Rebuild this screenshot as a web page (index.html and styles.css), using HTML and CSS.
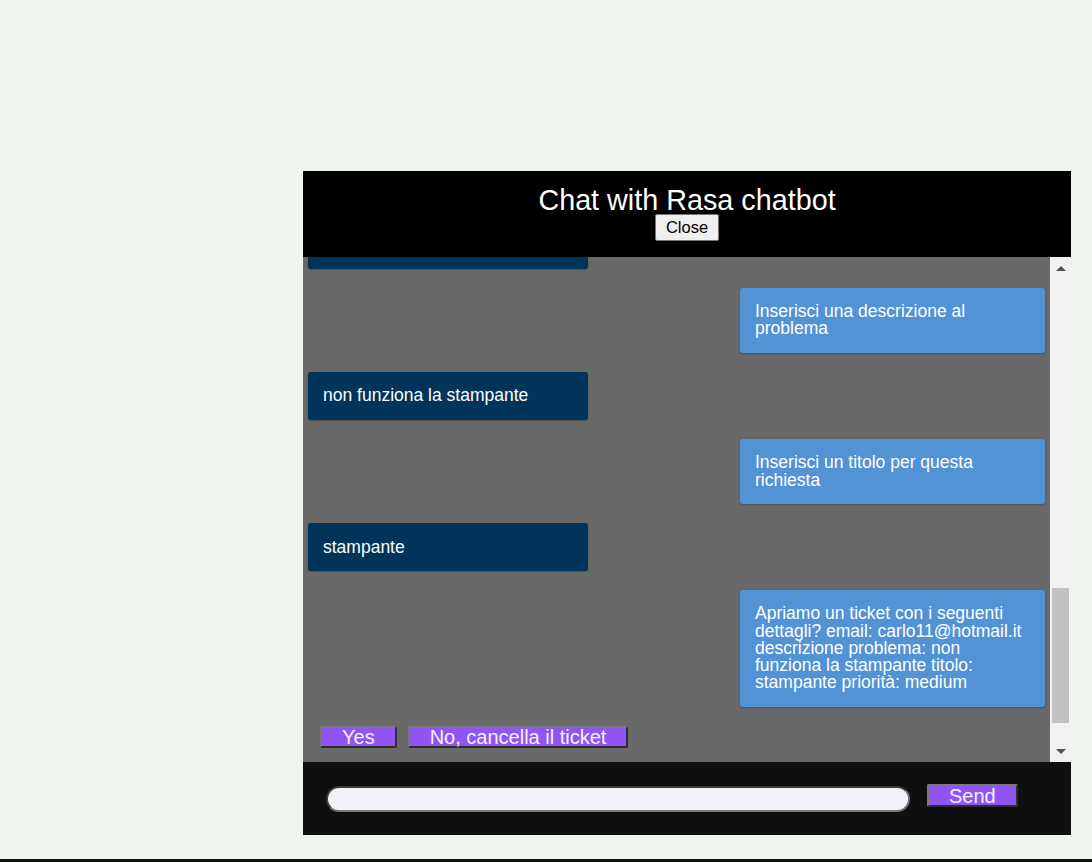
FILE: index.html
```html
<!DOCTYPE html>
<html lang="it">
<head>
<meta charset="utf-8">
<title>Chat with Rasa chatbot</title>
<link rel="stylesheet" href="styles.css">
</head>
<body>
<div class="page">
  <div class="chat">
    <header class="chat-header">
      <h1 class="chat-title">Chat with Rasa chatbot</h1>
      <button class="close-btn" type="button">Close</button>
    </header>
    <div class="messages-area">
      <div class="messages" id="messages">
        <div class="msg user">medium</div>
        <div class="msg bot" id="anchor">Inserisci una descrizione al problema</div>
        <div class="msg user">non funziona la stampante</div>
        <div class="msg bot">Inserisci un titolo per questa richiesta</div>
        <div class="msg user">stampante</div>
        <div class="msg bot">Apriamo un ticket con i seguenti dettagli? email: carlo11@hotmail.it descrizione problema: non funziona la stampante titolo: stampante priorità: medium</div>
        <div class="quick-replies">
          <button class="qr-btn" type="button">Yes</button>
          <button class="qr-btn" type="button">No, cancella il ticket</button>
        </div>
      </div>
      <div class="scrollbar" aria-hidden="true">
        <div class="sb-btn"><span class="sb-arrow up"></span></div>
        <div class="sb-track"><div class="sb-thumb"></div></div>
        <div class="sb-btn"><span class="sb-arrow down"></span></div>
      </div>
    </div>
    <div class="chat-footer">
      <input class="chat-input" type="text" aria-label="Messaggio">
      <button class="send-btn" type="button">Send</button>
    </div>
  </div>
</div>
<div class="bottom-line"></div>
<script src="script.js"></script>
</body>
</html>
```

FILE: styles.css
```css
html, body {
  margin: 0;
  padding: 0;
}

body {
  background: #eef5ee;
  font-family: "Liberation Sans", Arial, sans-serif;
  overflow: hidden;
  height: 862px;
}

.page {
  box-sizing: border-box;
  height: 859px;
  padding-top: 171px;
  padding-left: 303px;
}

.bottom-line {
  height: 3px;
  background: #111111;
}

.chat {
  width: 768px;
  display: flex;
  flex-direction: column;
}

.chat-header {
  box-sizing: border-box;
  height: 86px;
  background: #000000;
  display: flex;
  flex-direction: column;
  align-items: center;
  padding-top: 13px;
}

.chat-title {
  margin: 0;
  color: #ffffff;
  font-weight: normal;
  font-size: 28.75px;
  line-height: 32px;
  font-family: "Liberation Sans", Arial, sans-serif;
}

.close-btn {
  margin-top: -2px;
  font-family: "Liberation Sans", Arial, sans-serif;
  font-size: 16.5px;
  line-height: 19px;
  padding: 3px 9.5px;
  background: #efefef;
  color: #000000;
  border: 1px solid #767676;
  border-radius: 2px;
}

.messages-area {
  display: flex;
  height: 505px;
}

.messages {
  flex: 1;
  box-sizing: border-box;
  height: 505px;
  overflow: hidden;
  position: relative;
  background: #696969;
  display: flex;
  flex-direction: column;
  gap: 19.2px;
  padding: 10px 0 81px 0;
}

.scrollbar {
  width: 21px;
  flex: none;
  background: #f1f1f1;
  display: flex;
  flex-direction: column;
}

.sb-btn {
  height: 21px;
  flex: none;
  display: flex;
  align-items: center;
  justify-content: center;
}

.sb-arrow {
  width: 0;
  height: 0;
  border-left: 5px solid transparent;
  border-right: 5px solid transparent;
}

.sb-arrow.up {
  border-bottom: 5px solid #505050;
  margin-top: 1px;
}

.sb-arrow.down {
  border-top: 5px solid #505050;
  margin-top: -1px;
}

.sb-track {
  flex: 1;
}

.sb-thumb {
  margin: 310px 2px 0 2px;
  height: 135px;
  background: #c1c1c1;
}

.msg {
  box-sizing: border-box;
  padding: 15.25px 15px;
  font-size: 17.5px;
  line-height: 17.25px;
  color: #ffffff;
  border-radius: 3px;
  flex: none;
}

.msg.user {
  align-self: flex-start;
  width: 280px;
  margin-left: 5px;
  background: #003459;
  box-shadow: 0 1px 2px rgba(0, 0, 0, 0.25);
}

.msg.bot {
  align-self: flex-end;
  width: 305px;
  margin-right: 5px;
  background: #5193d5;
  box-shadow: 0 1px 2px rgba(0, 0, 0, 0.25);
}

.quick-replies {
  display: flex;
  gap: 11px;
  padding-left: 17px;
  flex: none;
}

.qr-btn,
.send-btn {
  font-family: "Liberation Sans", Arial, sans-serif;
  font-size: 20px;
  line-height: 17px;
  padding: 1px 20px 0 20px;
  background: #8e55f4;
  color: #f6f0ff;
  border: 2px solid;
  border-color: #7a7a7a #2e2e2e #2e2e2e #7a7a7a;
  border-radius: 2px;
}

.chat-footer {
  box-sizing: border-box;
  height: 73px;
  background: #0f0f0f;
  display: flex;
  align-items: flex-start;
  gap: 17px;
  padding: 24px 0 0 23px;
}

.chat-input {
  box-sizing: border-box;
  width: 584px;
  height: 26px;
  margin: 0;
  padding: 0 12px;
  border: 2px solid;
  border-color: #3a3a3a #777777 #777777 #3a3a3a;
  border-radius: 13px;
  background: #f1f1fa;
  font-family: "Liberation Sans", Arial, sans-serif;
  font-size: 16px;
}

.send-btn {
  margin-top: -2px;
  padding-top: 2px;
}
```

FILE: script.js
```js
(function () {
  var list = document.getElementById('messages');
  var anchor = document.getElementById('anchor');
  if (list && anchor) {
    list.scrollTop = anchor.offsetTop - 31;
  }
})();
```
